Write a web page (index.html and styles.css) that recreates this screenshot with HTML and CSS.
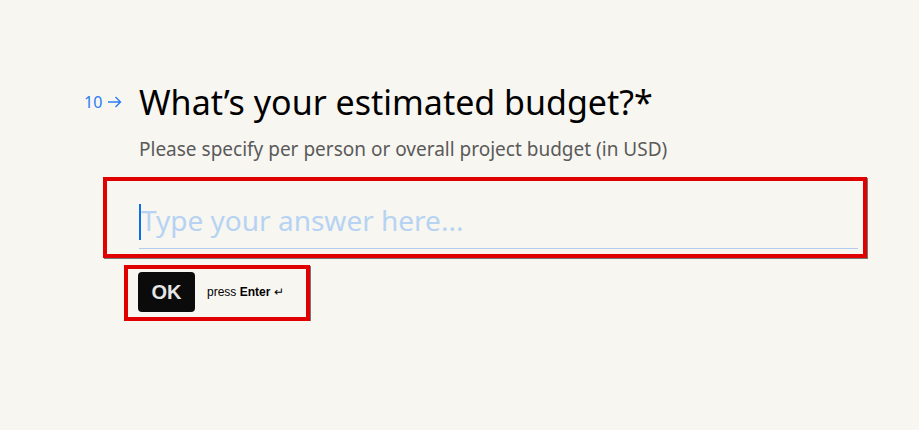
FILE: index.html
```html
<!DOCTYPE html>
<html>
<head>
<meta charset="utf-8">
<link rel="stylesheet" href="styles.css">
</head>
<body>
<main class="page">
  <section class="question">
    <div class="num">10 <svg class="arrow" width="15" height="12" viewBox="0 0 15 12"><path d="M1 6H13.5M8.5 1L13.5 6L8.5 11" fill="none" stroke="#2a7df5" stroke-width="1.4"/></svg></div>
    <div class="content">
      <h1 class="title">What’s your estimated budget?*</h1>
      <p class="desc">Please specify per person or overall project budget (in USD)</p>
      <div class="answer-box">
        <div class="field">
          <span class="caret"></span>
          <span class="placeholder">Type your answer here...</span>
        </div>
      </div>
      <div class="ok-box">
        <button class="ok">OK</button>
        <span class="hint">press <b>Enter</b> ↵</span>
      </div>
    </div>
  </section>
</main>
</body>
</html>
```

FILE: styles.css
```css
html, body {
  margin: 0;
  padding: 0;
  background: #f8f6f1;
}
.page {
  padding-top: 80px;
}
.question {
  display: flex;
  align-items: flex-start;
}
.num {
  width: 123px;
  box-sizing: border-box;
  padding-left: 84px;
  padding-top: 11px;
  font-family: "Noto Sans", sans-serif;
  font-size: 16px;
  color: #2a7df5;
  white-space: nowrap;
  display: flex;
  align-items: center;
  gap: 5px;
}
.arrow {
  display: block;
}
.content {
  margin-left: 16px;
  display: flex;
  flex-direction: column;
  align-items: flex-start;
}
.title {
  margin: 0;
  font-family: "Noto Sans", sans-serif;
  font-weight: 400;
  font-size: 34px;
  line-height: 44px;
  color: #000;
}
.desc {
  margin: 12px 0 0;
  font-family: "Noto Sans", sans-serif;
  font-size: 19px;
  line-height: 26px;
  color: #5a5a5a;
}
.answer-box {
  margin-top: 15px;
  margin-left: -36px;
  width: 764px;
  height: 81px;
  box-sizing: border-box;
  border: 4px solid #e10000;
  box-shadow: 1px 1px 0 #777;
  padding: 22px 5px 0 32px;
}
.field {
  display: flex;
  align-items: center;
  height: 45px;
  border-bottom: 1px solid #b3cdee;
}
.caret {
  width: 2px;
  height: 36px;
  background: #0a6fe8;
  margin-top: -8px;
}
.placeholder {
  font-family: "Noto Sans", sans-serif;
  font-size: 28px;
  color: #b6d3f3;
  margin-top: -11px;
}
.ok-box {
  margin-top: 7px;
  margin-left: -15px;
  width: 186px;
  height: 56px;
  box-sizing: border-box;
  border: 4px solid #e10000;
  box-shadow: 1px 1px 0 #777;
  padding: 3px 10px 0 10px;
  display: flex;
  align-items: flex-start;
  gap: 12px;
}
.ok {
  width: 57px;
  height: 40px;
  border: none;
  border-radius: 4px;
  background: #0b0b0b;
  color: #e6e6e6;
  font-family: "Liberation Sans", Arial, sans-serif;
  font-weight: 700;
  font-size: 20px;
  padding: 0;
}
.hint {
  margin-top: 13px;
  font-family: "Liberation Sans", Arial, sans-serif;
  font-size: 12px;
  color: #000;
  white-space: nowrap;
}
.hint b {
  font-weight: 700;
}
```
